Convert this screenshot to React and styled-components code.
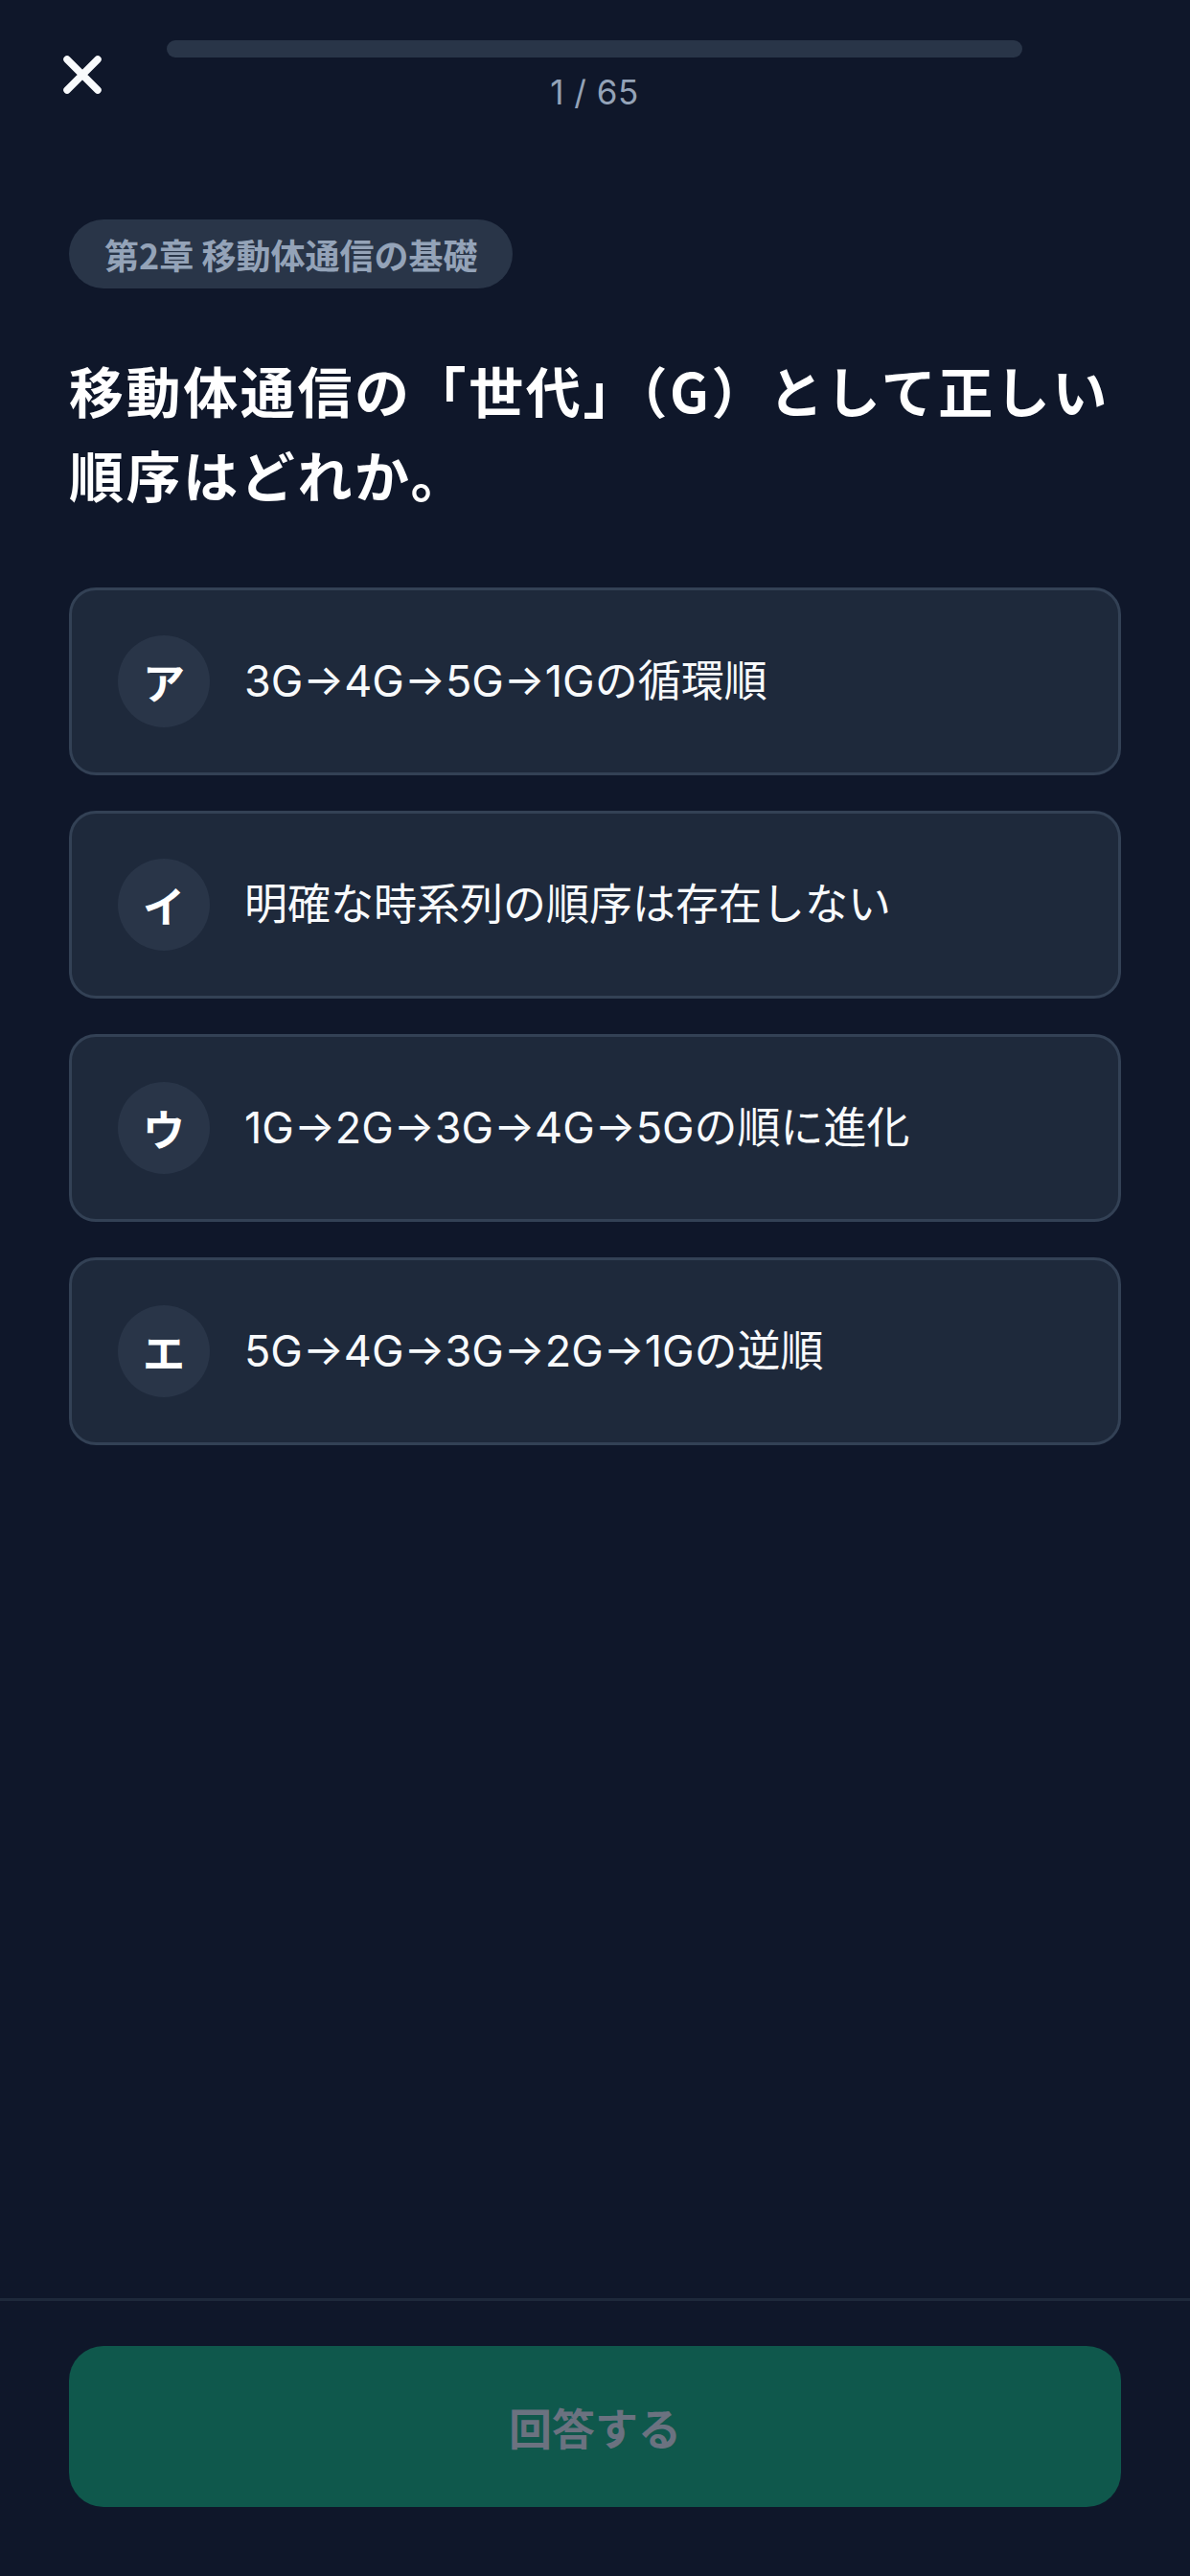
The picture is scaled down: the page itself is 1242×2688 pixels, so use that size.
import styled, { createGlobalStyle } from 'styled-components';

const GlobalStyle = createGlobalStyle`
  html, body {
    margin: 0;
    padding: 0;
    background-color: #0f172a;
  }
  body {
    font-family: "Inter", "Noto Sans CJK JP", sans-serif;
    -webkit-font-smoothing: antialiased;
  }
  * {
    box-sizing: border-box;
  }
`;

const Screen = styled.div`
  min-height: 2688px;
  display: flex;
  flex-direction: column;
  background-color: #0f172a;
  color: #f8fafc;
`;

const Header = styled.header`
  display: grid;
  grid-template-columns: 174px 1fr 175px;
  padding-top: 42px;
`;

const CloseButton = styled.button`
  width: 44px;
  height: 44px;
  margin: 14px 0 0 64px;
  padding: 0;
  border: none;
  background: transparent;
  display: flex;
  align-items: center;
  justify-content: center;
  cursor: pointer;
`;

const ProgressWrap = styled.div`
  display: flex;
  flex-direction: column;
  align-items: center;
  gap: 16px;
`;

const ProgressTrack = styled.div`
  width: 100%;
  height: 18px;
  border-radius: 9px;
  background-color: #293548;
  overflow: hidden;
`;

const ProgressFill = styled.div`
  height: 100%;
  background-color: #10b981;
`;

const Counter = styled.div`
  font-size: 35px;
  line-height: 40px;
  color: #94a3b8;
  letter-spacing: 0.5px;
`;

const Main = styled.main`
  flex: 1;
  padding: 0 72px;
  display: flex;
  flex-direction: column;
  align-items: flex-start;
`;

const ChapterBadge = styled.span`
  margin-top: 113px;
  height: 72px;
  padding: 0 37px;
  display: inline-flex;
  align-items: center;
  border-radius: 36px;
  background-color: #293548;
  color: #94a3b8;
  font-family: "Noto Sans CJK JP", sans-serif;
  font-weight: 700;
  font-size: 36px;
  white-space: nowrap;
`;

const Question = styled.h1`
  max-width: 1098px;
  margin: 61px 0 0;
  font-family: "Noto Sans CJK JP", sans-serif;
  font-size: 57px;
  line-height: 88px;
  font-weight: 700;
  letter-spacing: 2.6px;
  color: #ffffff;
`;

const OptionList = styled.div`
  width: 100%;
  margin-top: 75px;
  display: flex;
  flex-direction: column;
  gap: 37px;
`;

const OptionCard = styled.button`
  width: 100%;
  display: flex;
  align-items: center;
  gap: 36px;
  padding: 47px 48px;
  border: 3px solid ${({ $selected }) => ($selected ? '#10b981' : '#334155')};
  border-radius: 28px;
  background-color: #1e293b;
  text-align: left;
  cursor: pointer;
`;

const OptionLetter = styled.span`
  flex: none;
  width: 96px;
  height: 96px;
  border-radius: 50%;
  background-color: #293548;
  display: flex;
  align-items: center;
  justify-content: center;
  font-family: "Noto Sans CJK JP", sans-serif;
  font-weight: 700;
  font-size: 44px;
  color: #ffffff;
`;

const OptionText = styled.span`
  font-family: "Inter", "Noto Sans CJK JP", sans-serif;
  font-size: 45px;
  line-height: 60px;
  color: #f8fafc;
`;

const Footer = styled.footer`
  border-top: 3px solid #1e293b;
  padding: 47px 72px 72px;
`;

const SubmitButton = styled.button`
  width: 100%;
  height: 168px;
  border: none;
  border-radius: 36px;
  background-color: #0f584c;
  color: #6b7280;
  font-family: "Noto Sans CJK JP", sans-serif;
  font-weight: 700;
  font-size: 45px;
  cursor: not-allowed;
`;

const options = [
  { letter: 'ア', text: '3G→4G→5G→1Gの循環順' },
  { letter: 'イ', text: '明確な時系列の順序は存在しない' },
  { letter: 'ウ', text: '1G→2G→3G→4G→5Gの順に進化' },
  { letter: 'エ', text: '5G→4G→3G→2G→1Gの逆順' },
];

function CloseIcon() {
  return (
    <svg width="44" height="44" viewBox="0 0 44 44">
      <path
        d="M6 6 L38 38 M38 6 L6 38"
        stroke="#f8fafc"
        strokeWidth="7.5"
        strokeLinecap="round"
        fill="none"
      />
    </svg>
  );
}

export default function App() {
  const current = 1;
  const total = 65;

  return (
    <>
      <GlobalStyle />
      <Screen>
        <Header>
          <CloseButton aria-label="閉じる">
            <CloseIcon />
          </CloseButton>
          <ProgressWrap>
            <ProgressTrack>
              <ProgressFill style={{ width: 0 }} />
            </ProgressTrack>
            <Counter>
              {current} / {total}
            </Counter>
          </ProgressWrap>
          <div />
        </Header>

        <Main>
          <ChapterBadge>第2章 移動体通信の基礎</ChapterBadge>
          <Question>移動体通信の「世代」（G）として正しい順序はどれか。</Question>
          <OptionList>
            {options.map((option) => (
              <OptionCard key={option.letter}>
                <OptionLetter>{option.letter}</OptionLetter>
                <OptionText>{option.text}</OptionText>
              </OptionCard>
            ))}
          </OptionList>
        </Main>

        <Footer>
          <SubmitButton disabled>回答する</SubmitButton>
        </Footer>
      </Screen>
    </>
  );
}
